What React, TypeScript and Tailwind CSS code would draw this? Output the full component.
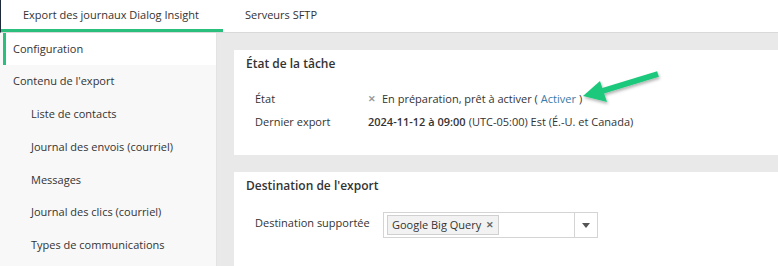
import React from "react";

const subItems = [
  "Liste de contacts",
  "Journal des envois (courriel)",
  "Messages",
  "Journal des clics (courriel)",
  "Types de communications",
];

export default function App() {
  return (
    <div
      className="relative w-[778px] h-[266px] overflow-hidden bg-white text-[11px] text-[#333]"
      style={{ fontFamily: '"Open Sans", "Liberation Sans", sans-serif' }}
    >
      {/* Tabs */}
      <div className="flex h-[33px] border-l border-[#1d2a3a] border-b border-b-[#d9d9d9] bg-white">
        <div className="relative flex items-center pl-[22px] pr-[24px] pb-[1px] text-[#333]">
          Export des journaux Dialog Insight
          <div className="absolute left-0 right-0 bottom-0 h-[3px] bg-[#2bbf7e]" />
        </div>
        <div className="flex items-center px-[22px] pb-[1px] text-[#333]">Serveurs SFTP</div>
      </div>

      <div className="flex h-[233px]">
        {/* Sidebar */}
        <div className="w-[217px] shrink-0 bg-[#f8f8f8] border-r border-[#e3e3e3]">
          <div className="ml-[3px] h-[32px] flex items-center bg-white border-l-[3px] border-[#2bbf7e] pl-[7px]">
            Configuration
          </div>
          <div className="h-[33px] flex items-center pl-[13px]">Contenu de l'export</div>
          {subItems.map((s) => (
            <div key={s} className="h-[32.75px] flex items-center pl-[31px]">
              {s}
            </div>
          ))}
        </div>

        {/* Main */}
        <div className="flex-1 bg-[#e9e9e9] pl-[17px] pt-[17px] flex flex-col gap-[17px]">
          <div className="bg-white h-[105px] pl-[12px]">
            <div className="text-[12px] font-semibold text-[#333] h-[28px] flex items-center">
              État de la tâche
            </div>
            <div className="mt-[12px] grid grid-cols-[113px_1fr] gap-y-[5px] pl-[9px]">
              <div className="h-[18px] flex items-center">État</div>
              <div className="h-[18px] flex items-center">
                <span className="text-[#999] text-[9px] mr-[6px] font-bold">✕</span>
                En préparation, prêt à activer (
                <span className="text-[#3a7aa8] mx-[3px]">Activer</span>)
              </div>
              <div className="h-[18px] flex items-center">Dernier export</div>
              <div className="h-[18px] flex items-center">
                <span className="font-semibold">2024-11-12 à 09:00</span>
                <span className="ml-[3px]">(UTC-05:00) Est (É.-U. et Canada)</span>
              </div>
            </div>
          </div>

          <div className="bg-white flex-1 pl-[12px]">
            <div className="text-[12px] font-semibold text-[#333] h-[28px] flex items-center">
              Destination de l'export
            </div>
            <div className="mt-[12px] flex items-start pl-[9px]">
              <div className="w-[128px] h-[22px] flex items-center">Destination supportée</div>
              <div className="w-[215px] h-[26px] border border-[#d4d4d4] flex items-center">
                <div className="flex-1 pl-[3px]">
                  <span className="inline-flex items-center h-[20px] px-[4px] bg-[#f2f2f2] border border-[#d0d0d0]">
                    Google Big Query
                    <span className="ml-[5px] text-[9px] text-[#666] font-bold">✕</span>
                  </span>
                </div>
                <div className="w-[23px] h-full border-l border-[#d4d4d4] flex items-center justify-center">
                  <svg width="8" height="5" viewBox="0 0 8 5">
                    <path d="M0 0 L8 0 L4 5 Z" fill="#555" />
                  </svg>
                </div>
              </div>
            </div>
          </div>
        </div>
      </div>

      {/* Annotation arrow */}
      <svg
        className="absolute left-[575px] top-[65px]"
        width="95"
        height="45"
        viewBox="0 0 95 45"
      >
        <defs>
          <filter id="sh" x="-20%" y="-40%" width="140%" height="180%">
            <feDropShadow dx="1" dy="2" stdDeviation="1.5" floodColor="#000" floodOpacity="0.3" />
          </filter>
        </defs>
        <g filter="url(#sh)">
          <line x1="83" y1="9" x2="24" y2="27" stroke="#1dc87c" strokeWidth="6" />
          <path d="M8 31 L25 16 L32 37 Z" fill="#1dc87c" />
        </g>
      </svg>
    </div>
  );
}
